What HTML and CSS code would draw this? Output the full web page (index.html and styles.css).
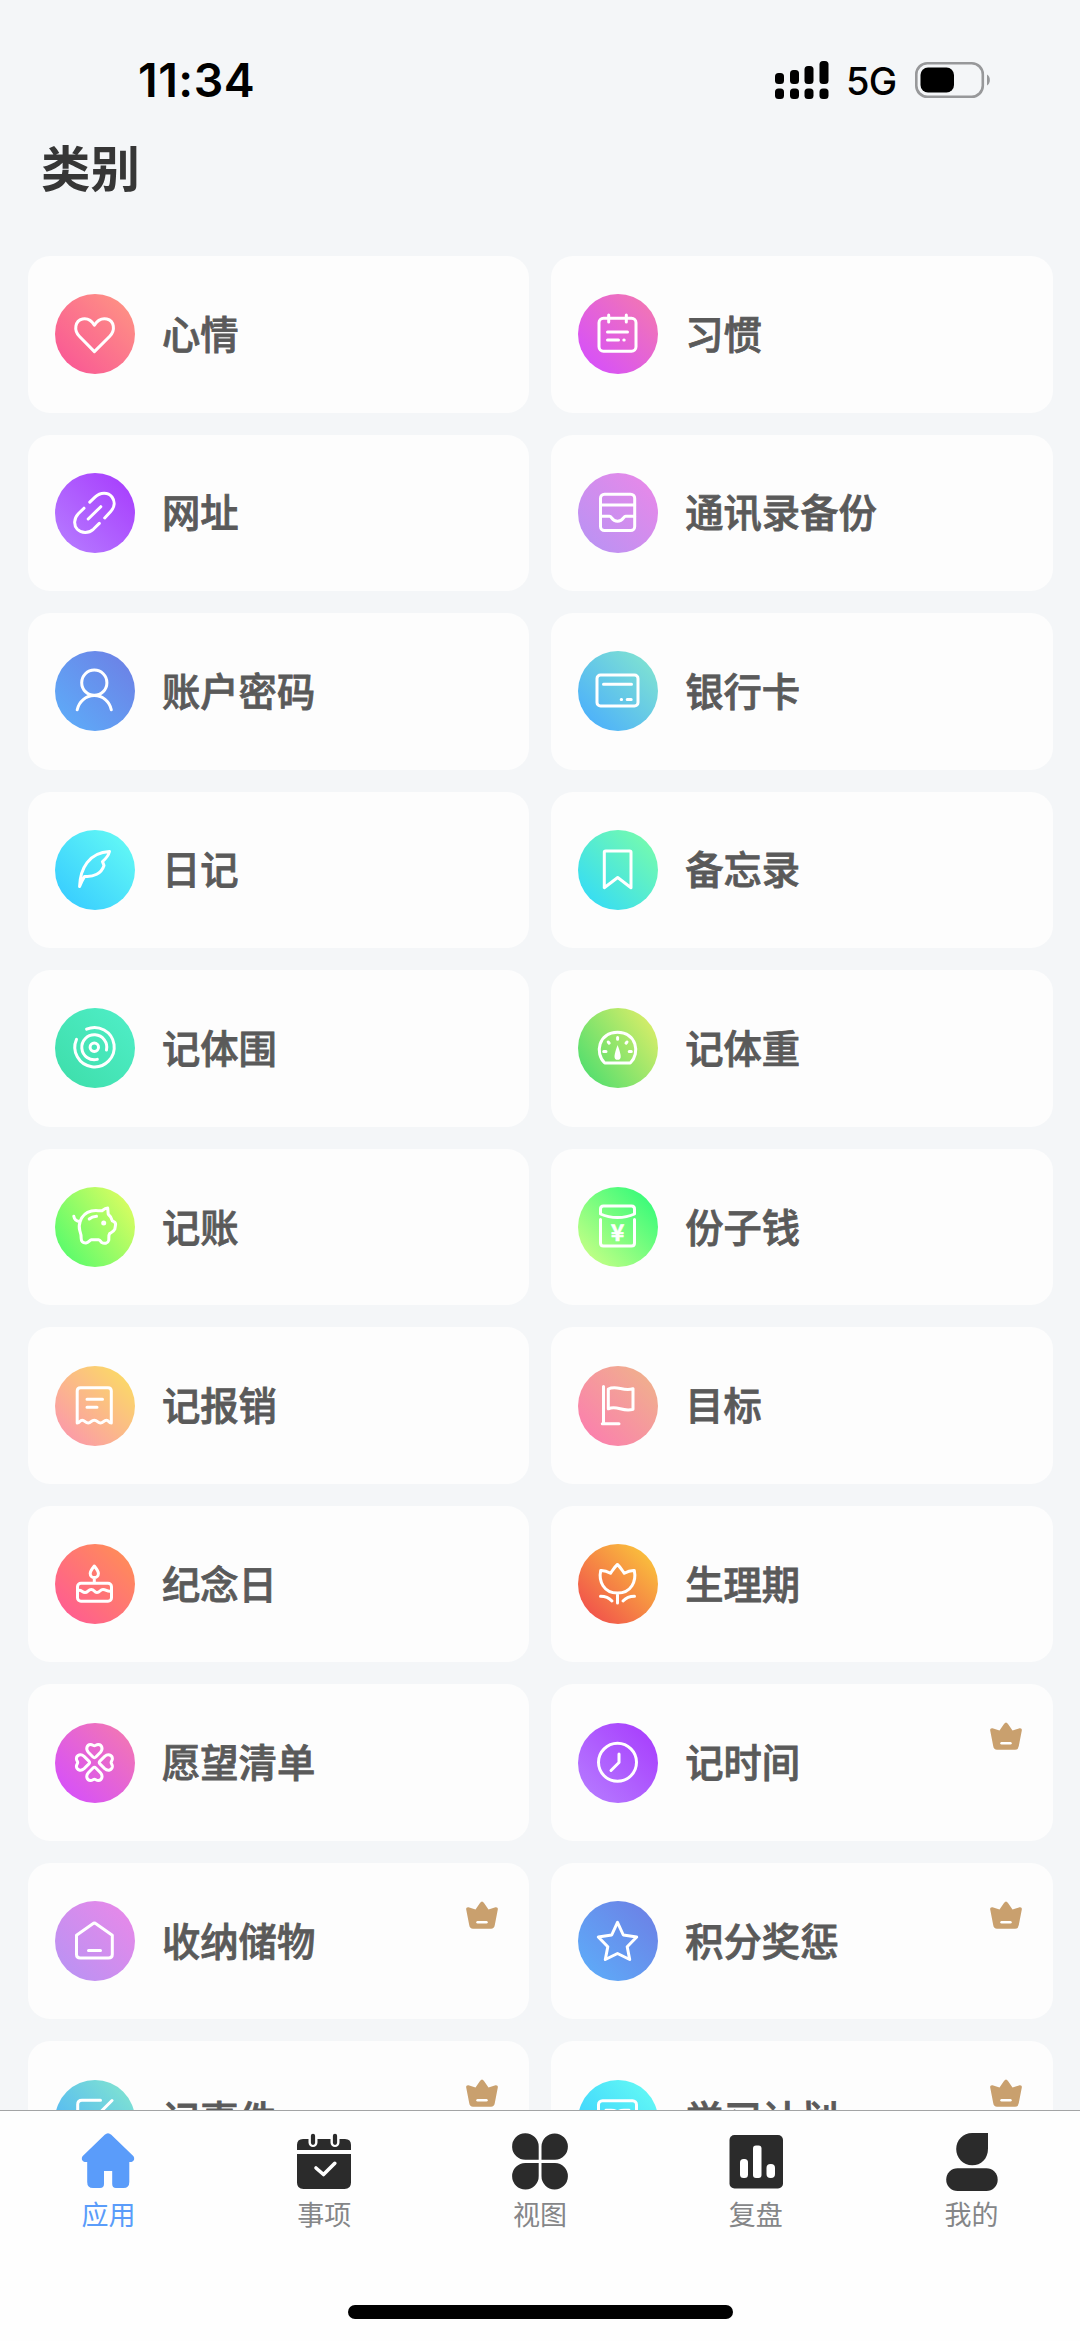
FILE: index.html
```html
<!DOCTYPE html>
<html lang="zh-CN">
<head>
<meta charset="utf-8">
<title>类别</title>
<link rel="stylesheet" href="styles.css">
</head>
<body>
<div class="screen">
  <header class="status">
    <span class="time">11:34</span>
    <div class="status-right">
      <svg class="signal" width="54" height="38" viewBox="0 0 54 38">
        <rect x="0" y="12" width="9" height="11" rx="3.500"/><rect x="15" y="9" width="9" height="14" rx="3.500"/><rect x="29.500" y="5" width="9" height="18" rx="3.500"/><rect x="44.500" y="0" width="9" height="23" rx="3.500"/>
        <rect x="0" y="27.500" width="9" height="10.500" rx="3.500"/><rect x="15" y="27.500" width="9" height="10.500" rx="3.500"/><rect x="29.500" y="27.500" width="9" height="10.500" rx="3.500"/><rect x="44.500" y="27.500" width="9" height="10.500" rx="3.500"/>
      </svg>
      <span class="network">5G</span>
      <svg class="battery" width="76" height="36" viewBox="0 0 76 36">
        <rect x="1.300" y="1.300" width="66.500" height="33.400" rx="11" fill="none" stroke="#97989a" stroke-width="2.600"/>
        <rect x="5.500" y="5.500" width="33.500" height="25" rx="7.500"/>
        <path d="M72 12.500C75.800 14.500 75.800 21.500 72 23.500Z" fill="#97989a"/>
      </svg>
    </div>
  </header>
  <h1 class="title">类别</h1>
  <main class="content">
    <div class="grid">
      <div class="card"><span class="icon coral"><svg viewBox="0 0 80 80"><path d="M39.400 57.600L24.300 42.200C18.500 36.200 20 26.800 27.500 25C33 24 37 27.200 39.400 31.200C41.800 27.200 46.300 24 51.800 25C59.300 26.800 60.600 36.200 54.800 42.200Z"/></svg></span><span class="name">心情</span></div>
      <div class="card"><span class="icon orchid"><svg viewBox="0 0 80 80"><rect x="21" y="24.300" width="37" height="33" rx="4.500"/><path d="M30.700 21V28M48.300 21V28M29.500 38H49.500M29.500 46H40.500M45.800 46H46.200"/></svg></span><span class="name">习惯</span></div>
      <div class="card"><span class="icon purple"><svg viewBox="0 0 80 80"><path d="M34.800 29.200L40 24.200C45.500 18.800 53.300 19.200 57 24C60.300 28.500 59.700 34 55.700 38.500L49.700 45M29 35.200L23.300 40.800C18.500 46 18.700 52.300 22.300 56.200C26.500 60.500 33.700 60.500 38.300 56.300L44.300 50.400M33.200 46L45.800 33.700"/></svg></span><span class="name">网址</span></div>
      <div class="card"><span class="icon lilac"><svg viewBox="0 0 80 80"><rect x="22.500" y="21.200" width="34.200" height="36.300" rx="4"/><path d="M22.500 32H56.700M22.500 43.200H31.500C34 43.200 33.500 48.300 39.500 48.300C45.500 48.300 45.200 43.200 47.700 43.200H56.700"/></svg></span><span class="name">通讯录备份</span></div>
      <div class="card"><span class="icon blue"><svg viewBox="0 0 80 80"><circle cx="39.300" cy="31.700" r="12.600"/><path d="M22.200 58.700C24 50.400 30.800 44.600 39.300 44.600C47.800 44.600 54.600 50.400 56.300 58.700"/></svg></span><span class="name">账户密码</span></div>
      <div class="card"><span class="icon sky"><svg viewBox="0 0 80 80"><rect x="19" y="24" width="41" height="31" rx="3.500"/><path d="M25.500 33.300H53.500M43.200 48.600H43.600M49.200 48.600H53.200"/></svg></span><span class="name">银行卡</span></div>
      <div class="card"><span class="icon cyan"><svg viewBox="0 0 80 80"><path d="M24.600 56.500C25.200 38.500 34 22.500 54.500 21.500C53.500 25.500 50.500 29 47.500 31.600L49 35.500C46.500 43.500 38.500 47.300 29.600 46.400C27.500 49.800 25.800 53 24.600 56.500Z"/></svg></span><span class="name">日记</span></div>
      <div class="card"><span class="icon aqua"><svg viewBox="0 0 80 80"><path d="M27.600 21H51.700Q53 21 53 22.300V57.700L39.700 47.500L26.300 57.700V22.300Q26.300 21 27.600 21Z"/></svg></span><span class="name">备忘录</span></div>
      <div class="card"><span class="icon mint"><svg viewBox="0 0 80 80"><path d="M31.600 21.200A19.700 19.700 0 1 1 21.500 31.300M51.500 42A12.500 12.500 0 1 0 42.300 51.400"/><circle cx="39.300" cy="39.300" r="4.200"/></svg></span><span class="name">记体围</span></div>
      <div class="card"><span class="icon lime"><svg viewBox="0 0 80 80"><path d="M26.700 55C16.500 45.500 20.500 24.200 39.500 24.200C58.500 24.200 62.500 45.500 52.300 55Z"/><path d="M25.700 43.400H28M30.200 34L31.200 35.200M39.600 29.500V31.200M49 34L48 35.200M51.200 43.400H53.300"/><path fill="#fff" stroke="none" d="M39.600 37C41 40.500 42.700 46 42.700 48.700A3.100 3.100 0 0 1 36.500 48.700C36.500 46 38.200 40.500 39.600 37Z"/></svg></span><span class="name">记体重</span></div>
      <div class="card"><span class="icon green"><svg viewBox="0 0 80 80"><path d="M18.800 29.200C19.300 32.500 21.700 34.300 25.200 34.500M25.200 34.500C27 28.800 31 25.300 36.500 24C41 23 43.500 24 47 23.700Q50.500 21 52.700 21L53.200 27.200C55.500 29 56.700 31.300 57.300 33.800Q60.800 35 60.600 37.500L59.800 42.200C58.500 45 56 45.500 54.700 46.500C53.200 48.500 54.200 51.500 53.700 53.500C53 56.500 49 57 46.800 55.500C45.500 54.500 45.500 53 43.500 52.700H36.500C34.500 53 33.800 55.700 31 56C27.500 56.200 26.200 54 26.200 51.500C26.400 48.500 25.800 46.500 24.900 44C23.700 40.800 24.100 37.500 25.200 34.500M34.200 32C36 30.500 38.700 29.600 41.500 29.300"/><circle cx="48.700" cy="36" r="2.500" fill="#fff" stroke="none"/></svg></span><span class="name">记账</span></div>
      <div class="card"><span class="icon spring"><svg viewBox="0 0 80 80"><path d="M22.500 27V22Q22.500 19 25.500 19H53.500Q56.500 19 56.500 22V27C51 29.500 46 30.500 39.500 30.500C33 30.500 28 29.500 22.500 27ZM22.500 32.500V56Q22.500 59 25.500 59H53.500Q56.500 59 56.500 56V32.500"/><text class="yen" x="39.600" y="54.300" text-anchor="middle">¥</text></svg></span><span class="name">份子钱</span></div>
      <div class="card"><span class="icon peach"><svg viewBox="0 0 80 80"><path d="M22.200 57V25Q22.200 21.700 25.500 21.700H53Q56.300 21.700 56.300 25V57C53.500 57 54 54.300 51.500 54.300C48.500 54.300 48.500 57 45.500 57C42.500 57 42.500 54.300 39.300 54.300C36 54.300 36.200 57 33.200 57C30.200 57 30 54.300 27.200 54.300C24.500 54.300 25 57 22.200 57ZM32 33.200H47.500M32 41.300H42"/></svg></span><span class="name">记报销</span></div>
      <div class="card"><span class="icon rose"><svg viewBox="0 0 80 80"><path d="M25.500 20.500V57.800M24.300 57.800H41M30.300 23C39 18.500 44.500 26 55 22.800V43.300C44.500 46.500 39 38.700 30.300 42.800Z"/></svg></span><span class="name">目标</span></div>
      <div class="card"><span class="icon sunset"><svg viewBox="0 0 80 80"><path d="M39.300 22C36.500 25.500 35.200 27.500 35.200 29.500A4.100 4.100 0 0 0 43.400 29.500C43.400 27.500 42.100 25.500 39.300 22ZM39.300 34V38.500"/><rect x="22.500" y="39.300" width="34" height="18" rx="3.500"/><path d="M22.500 46.500C27 45.500 27 48.500 30 48.500C33 48.500 33 45.500 36.300 45.500C39.500 45.500 39 48.500 42 48.500C45 48.500 45 45.500 48 45.500C51.500 45.500 52 48 56.500 47"/></svg></span><span class="name">纪念日</span></div>
      <div class="card"><span class="icon amber"><svg viewBox="0 0 80 80"><path d="M22.700 26.500C26 26.300 29 27.200 32.500 29.300C34.500 26.500 36.300 23.200 39.400 20.500C42.500 23.200 44.300 26.500 46.300 29.300C49.800 27.200 53 26.300 56.300 26.500C58.500 37 53.500 49 39.500 49C25.500 49 20.500 37 22.700 26.500ZM39.500 49V59M22.500 52.200C27.500 52.200 31 53.700 34 57M56.500 52.200C51.500 52.200 48 53.700 45 57"/></svg></span><span class="name">生理期</span></div>
      <div class="card"><span class="icon orchid"><svg viewBox="0 0 80 80"><path d="M39.400 34.700Q38.700 34.700 38 34L33.300 29.200C30.500 26 31.800 21.800 35.500 21.500C37.300 21.400 38.300 22.800 39.400 22.800C40.500 22.800 41.500 21.400 43.300 21.500C47 21.800 48.300 26 45.500 29.200L40.800 34Q40.100 34.700 39.400 34.700Z"/><path d="M39.400 34.700Q38.700 34.700 38 34L33.300 29.200C30.500 26 31.800 21.800 35.500 21.500C37.300 21.400 38.300 22.800 39.400 22.800C40.500 22.800 41.500 21.400 43.300 21.500C47 21.800 48.300 26 45.500 29.200L40.800 34Q40.100 34.700 39.400 34.700Z" transform="rotate(90 39.400 39.500)"/><path d="M39.400 34.700Q38.700 34.700 38 34L33.300 29.200C30.500 26 31.800 21.800 35.500 21.500C37.300 21.400 38.300 22.800 39.400 22.800C40.500 22.800 41.500 21.400 43.300 21.500C47 21.800 48.300 26 45.500 29.200L40.800 34Q40.100 34.700 39.400 34.700Z" transform="rotate(180 39.400 39.500)"/><path d="M39.400 34.700Q38.700 34.700 38 34L33.300 29.200C30.500 26 31.800 21.800 35.500 21.500C37.300 21.400 38.300 22.800 39.400 22.800C40.500 22.800 41.500 21.400 43.300 21.500C47 21.800 48.300 26 45.500 29.200L40.800 34Q40.100 34.700 39.400 34.700Z" transform="rotate(270 39.400 39.500)"/></svg></span><span class="name">愿望清单</span></div>
      <div class="card"><span class="icon purple"><svg viewBox="0 0 80 80"><circle cx="39.500" cy="39.300" r="19"/><path d="M41 31V39.500L33 47.500"/></svg></span><span class="name">记时间</span><svg class="crown" viewBox="0 0 32 28"><path d="M16 0.500Q17 0.500 18 2L22.500 8.500L29.500 6.300Q32.300 6 31.800 8.500L28.800 24Q28.200 27.800 25 27.800H7Q3.800 27.800 3.200 24L0.200 8.500Q-.3 6 2.500 6.300L9.500 8.500L14 2Q15 .5 16 .5Z"/><path class="crown-line" d="M11.500 21.300H20.500"/></svg></div>
      <div class="card"><span class="icon lilac"><svg viewBox="0 0 80 80"><path d="M21.500 34.200L37.500 23Q39.400 21.300 41.300 23L57.300 34.200V53.500Q57.300 57 53.500 57H25.300Q21.500 57 21.500 53.500ZM33.500 49.500H45.500"/></svg></span><span class="name">收纳储物</span><svg class="crown" viewBox="0 0 32 28"><path d="M16 0.500Q17 0.500 18 2L22.500 8.500L29.500 6.300Q32.300 6 31.800 8.500L28.800 24Q28.200 27.800 25 27.800H7Q3.800 27.800 3.200 24L0.200 8.500Q-.3 6 2.500 6.300L9.500 8.500L14 2Q15 .5 16 .5Z"/><path class="crown-line" d="M11.500 21.300H20.500"/></svg></div>
      <div class="card"><span class="icon blue"><svg viewBox="0 0 80 80"><path d="M39.500 21.300L45.300 34L58.700 36L49.200 45.700L51.700 58.500L39.500 52.500L27.300 58.500L29.800 45.700L20.300 36L33.700 34Z"/></svg></span><span class="name">积分奖惩</span><svg class="crown" viewBox="0 0 32 28"><path d="M16 0.500Q17 0.500 18 2L22.500 8.500L29.500 6.300Q32.300 6 31.800 8.500L28.800 24Q28.200 27.800 25 27.800H7Q3.800 27.800 3.200 24L0.200 8.500Q-.3 6 2.500 6.300L9.500 8.500L14 2Q15 .5 16 .5Z"/><path class="crown-line" d="M11.500 21.300H20.500"/></svg></div>
      <div class="card"><span class="icon sky"><svg viewBox="0 0 80 80"><path d="M45.500 20.300H27Q22.700 20.300 22.700 24.500V53Q22.700 57 27 57H52Q56.300 57 56.300 53V38M57 20.500L38 39.500"/></svg></span><span class="name">记事件</span><svg class="crown" viewBox="0 0 32 28"><path d="M16 0.500Q17 0.500 18 2L22.500 8.500L29.500 6.300Q32.300 6 31.800 8.500L28.800 24Q28.200 27.800 25 27.800H7Q3.800 27.800 3.200 24L0.200 8.500Q-.3 6 2.500 6.300L9.500 8.500L14 2Q15 .5 16 .5Z"/><path class="crown-line" d="M11.500 21.300H20.500"/></svg></div>
      <div class="card"><span class="icon cyan"><svg viewBox="0 0 80 80"><rect x="20.500" y="20.700" width="38" height="37" rx="4"/><path d="M28 30.300H33Q37 30.300 39.500 32Q42 30.300 46 30.300H51V46H28Z"/></svg></span><span class="name">学习计划</span><svg class="crown" viewBox="0 0 32 28"><path d="M16 0.500Q17 0.500 18 2L22.500 8.500L29.500 6.300Q32.300 6 31.800 8.500L28.800 24Q28.200 27.800 25 27.800H7Q3.800 27.800 3.200 24L0.200 8.500Q-.3 6 2.500 6.300L9.500 8.500L14 2Q15 .5 16 .5Z"/><path class="crown-line" d="M11.500 21.300H20.500"/></svg></div>
    </div>
  </main>
  <footer class="bottom">
    <nav class="tabs">
      <a class="tab active"><svg viewBox="0 0 60 60"><path d="M26.700 3.800Q30 .8 33.300 3.800L55.500 25.200Q57.300 28.500 54.500 30.400Q53.500 31 51.300 30.900V51Q51.300 57 45.500 57H38Q34.200 57 34.200 53V40H26V53Q26 57 22 57H15Q9.200 57 9.200 51V30.900Q6.500 31 5.500 30.400Q2.700 28.500 4.500 25.200Z"/></svg><span>应用</span></a>
      <a class="tab"><svg viewBox="0 0 60 60"><path d="M3 19V14Q3 8 9 8H51Q57 8 57 14V19ZM3 23H57V51.500Q57 58 50.500 58H9.500Q3 58 3 51.500Z"/><path d="M19 4.500V11.500M41 4.500V11.500" fill="none" stroke="#fff" stroke-width="9" stroke-linecap="round"/><path d="M19 4.800V11.800M41 4.800V11.800" fill="none" stroke="#2b2b2b" stroke-width="4.200" stroke-linecap="round"/><path d="M22 37L29.500 43.500L40.800 32.300" fill="none" stroke="#fff" stroke-width="3.600" stroke-linecap="round" stroke-linejoin="round"/></svg><span>事项</span></a>
      <a class="tab"><svg viewBox="0 0 60 60"><path d="M28.700 28.800H16A13.300 13.300 0 1 1 28.700 15.500ZM31.500 28.800V15.500A13.200 13.200 0 1 1 45 28.800ZM28.700 32V45A13.300 13.300 0 1 1 15.500 32ZM31.500 32H45A13.200 13.200 0 1 1 31.500 45Z"/></svg><span>视图</span></a>
      <a class="tab"><svg viewBox="0 0 60 60"><rect x="3.500" y="4" width="53.500" height="53.500" rx="5"/><g fill="#fff"><rect x="14" y="28" width="8" height="19" rx="3.500"/><rect x="27" y="14.500" width="8.500" height="32.500" rx="3"/><rect x="40.500" y="33" width="8.500" height="14" rx="4"/></g></svg><span>复盘</span></a>
      <a class="tab"><svg viewBox="0 0 60 60"><path d="M46 2V17.500C46 28 39 34.300 30.200 34.300C21 34.300 14.200 27 14.200 18C14.200 9 21 2 30.200 2Z"/><rect x="4.200" y="37.300" width="51.500" height="22.700" rx="11.350"/></svg><span>我的</span></a>
    </nav>
    <div class="home-indicator"></div>
  </footer>
</div>
</body>
</html>
```
FILE: styles.css
```css
* { box-sizing: border-box; }
body { margin: 0; background: #f4f6f8; font-family: "Noto Sans CJK SC", sans-serif; }
.screen { width: 1080px; height: 2341px; display: flex; flex-direction: column; overflow: hidden; }
.status { height: 128px; flex: none; display: flex; justify-content: space-between; align-items: flex-start; padding: 61px 89px 0 138px; font-family: Inter, sans-serif; color: #000; }
.time { font-size: 46.500px; line-height: 39px; font-weight: 600; letter-spacing: 0.500px; }
.status-right { display: flex; align-items: flex-start; }
.network { font-size: 38px; line-height: 41px; font-weight: 500; margin-left: 17px; width: 52px; letter-spacing: -0.700px; }
.battery { margin: 1px 0 0 17px; }
.title { margin: 0; flex: none; height: 128px; padding: 2px 0 0 41px; font-size: 49.400px; line-height: 72px; font-weight: 700; color: #363636; }
.content { flex: 1; min-height: 0; overflow: hidden; padding: 0 27.500px; }
.grid { display: grid; grid-template-columns: 1fr 1fr; grid-auto-rows: 156.560px; column-gap: 21.500px; row-gap: 22px; }
.card { display: flex; align-items: center; padding: 0 31px 0 27.500px; border-radius: 22px; background: #fdfdfd; }
.icon { width: 80px; height: 80px; flex: none; border-radius: 50%; margin-right: 27px; }
.icon svg { display: block; width: 80px; height: 80px; fill: none; stroke: #fff; stroke-width: 3; stroke-linecap: round; stroke-linejoin: round; }
.icon .yen { fill: #fff; stroke: #fff; stroke-width: 0.500px; font: 700 23px "Noto Sans CJK SC", sans-serif; }
.name { flex: 1; font-size: 38.300px; line-height: 56px; margin-top: -3px; font-weight: 500; color: #5a5a5a; -webkit-text-stroke: 0.800px #5a5a5a; white-space: nowrap; }
.crown { width: 32px; height: 28px; align-self: flex-start; margin-top: 38px; fill: #c9a06e; }
.crown-line { stroke: #fff; stroke-width: 2.400; stroke-linecap: round; }

.coral { background: linear-gradient(45deg, #f95995 10%, #fe9184 90%); }
.orchid { background: linear-gradient(45deg, #d650fa 10%, #f276b4 90%); }
.purple { background: linear-gradient(45deg, #b578ff 10%, #a840fd 90%); }
.lilac { background: linear-gradient(45deg, #bb92f3 10%, #e689e9 90%); }
.blue { background: linear-gradient(45deg, #5eaaf8 10%, #6c82e6 90%); }
.sky { background: linear-gradient(45deg, #4cb0fb 10%, #7fe2d2 90%); }
.cyan { background: linear-gradient(45deg, #38cdff 10%, #62f8f5 90%); }
.aqua { background: linear-gradient(45deg, #35dcf5 10%, #75fbae 90%); }
.mint { background: linear-gradient(45deg, #3fdfac 10%, #4eedc5 90%); }
.lime { background: linear-gradient(55deg, #52de6e 10%, #e0ee68 95%); }
.green { background: linear-gradient(55deg, #58fb6c 10%, #e2fd60 95%); }
.spring { background: linear-gradient(45deg, #c4ff86 10%, #36fb79 90%); }
.peach { background: linear-gradient(45deg, #fb99aa 10%, #fbda66 90%); }
.rose { background: linear-gradient(45deg, #fb7fae 10%, #f0b08d 90%); }
.sunset { background: linear-gradient(45deg, #ff5c92 10%, #ff8d58 90%); }
.amber { background: linear-gradient(45deg, #f1504c 10%, #fac23c 90%); }

.bottom { flex: none; height: 231.500px; border-top: 1.500px solid #a3a4a5; background: #fefefe; display: flex; flex-direction: column; justify-content: space-between; align-items: center; padding: 20px 0 22px; }
.tabs { display: flex; width: 1079px; }
.tab { flex: 1; display: flex; flex-direction: column; align-items: center; font-size: 27px; line-height: 36px; color: #858688; }
.tab svg { width: 60px; height: 60px; fill: #2b2b2b; margin-bottom: 5.500px; }
.tab.active { color: #5a9cfa; }
.tab.active svg { fill: #5a9cfa; }
.home-indicator { width: 385px; height: 14px; border-radius: 7px; background: #000; }
```
